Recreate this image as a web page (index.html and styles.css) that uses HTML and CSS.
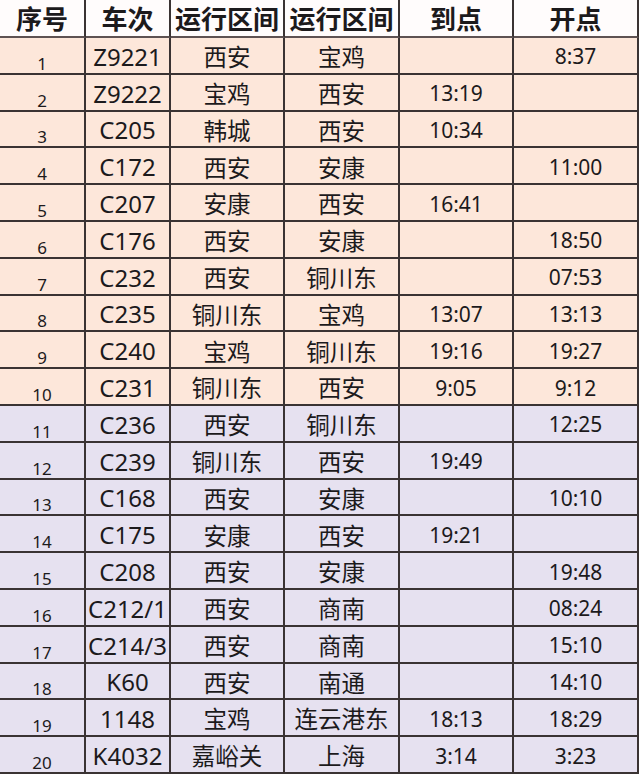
FILE: index.html
```html
<!DOCTYPE html>
<html lang="zh-CN">
<head>
<meta charset="utf-8">
<title>列车时刻表</title>
<link rel="stylesheet" href="styles.css">
</head>
<body>
<div class="table">
  <div class="row head">
    <div class="c">序号</div><div class="c">车次</div><div class="c">运行区间</div><div class="c">运行区间</div><div class="c">到点</div><div class="c">开点</div>
  </div>
  <div class="row peach"><div class="c no">1</div><div class="c tr">Z9221</div><div class="c st">西安</div><div class="c st">宝鸡</div><div class="c tm"></div><div class="c tm">8:37</div></div>
  <div class="row peach"><div class="c no">2</div><div class="c tr">Z9222</div><div class="c st">宝鸡</div><div class="c st">西安</div><div class="c tm">13:19</div><div class="c tm"></div></div>
  <div class="row peach"><div class="c no">3</div><div class="c tr">C205</div><div class="c st">韩城</div><div class="c st">西安</div><div class="c tm">10:34</div><div class="c tm"></div></div>
  <div class="row peach"><div class="c no">4</div><div class="c tr">C172</div><div class="c st">西安</div><div class="c st">安康</div><div class="c tm"></div><div class="c tm">11:00</div></div>
  <div class="row peach"><div class="c no">5</div><div class="c tr">C207</div><div class="c st">安康</div><div class="c st">西安</div><div class="c tm">16:41</div><div class="c tm"></div></div>
  <div class="row peach"><div class="c no">6</div><div class="c tr">C176</div><div class="c st">西安</div><div class="c st">安康</div><div class="c tm"></div><div class="c tm">18:50</div></div>
  <div class="row peach"><div class="c no">7</div><div class="c tr">C232</div><div class="c st">西安</div><div class="c st">铜川东</div><div class="c tm"></div><div class="c tm">07:53</div></div>
  <div class="row peach"><div class="c no">8</div><div class="c tr">C235</div><div class="c st">铜川东</div><div class="c st">宝鸡</div><div class="c tm">13:07</div><div class="c tm">13:13</div></div>
  <div class="row peach"><div class="c no">9</div><div class="c tr">C240</div><div class="c st">宝鸡</div><div class="c st">铜川东</div><div class="c tm">19:16</div><div class="c tm">19:27</div></div>
  <div class="row peach"><div class="c no">10</div><div class="c tr">C231</div><div class="c st">铜川东</div><div class="c st">西安</div><div class="c tm">9:05</div><div class="c tm">9:12</div></div>
  <div class="row lav"><div class="c no">11</div><div class="c tr">C236</div><div class="c st">西安</div><div class="c st">铜川东</div><div class="c tm"></div><div class="c tm">12:25</div></div>
  <div class="row lav"><div class="c no">12</div><div class="c tr">C239</div><div class="c st">铜川东</div><div class="c st">西安</div><div class="c tm">19:49</div><div class="c tm"></div></div>
  <div class="row lav"><div class="c no">13</div><div class="c tr">C168</div><div class="c st">西安</div><div class="c st">安康</div><div class="c tm"></div><div class="c tm">10:10</div></div>
  <div class="row lav"><div class="c no">14</div><div class="c tr">C175</div><div class="c st">安康</div><div class="c st">西安</div><div class="c tm">19:21</div><div class="c tm"></div></div>
  <div class="row lav"><div class="c no">15</div><div class="c tr">C208</div><div class="c st">西安</div><div class="c st">安康</div><div class="c tm"></div><div class="c tm">19:48</div></div>
  <div class="row lav"><div class="c no">16</div><div class="c tr">C212/1</div><div class="c st">西安</div><div class="c st">商南</div><div class="c tm"></div><div class="c tm">08:24</div></div>
  <div class="row lav"><div class="c no">17</div><div class="c tr">C214/3</div><div class="c st">西安</div><div class="c st">商南</div><div class="c tm"></div><div class="c tm">15:10</div></div>
  <div class="row lav"><div class="c no">18</div><div class="c tr">K60</div><div class="c st">西安</div><div class="c st">南通</div><div class="c tm"></div><div class="c tm">14:10</div></div>
  <div class="row lav"><div class="c no">19</div><div class="c tr">1148</div><div class="c st">宝鸡</div><div class="c st">连云港东</div><div class="c tm">18:13</div><div class="c tm">18:29</div></div>
  <div class="row lav"><div class="c no">20</div><div class="c tr">K4032</div><div class="c st">嘉峪关</div><div class="c st">上海</div><div class="c tm">3:14</div><div class="c tm">3:23</div></div>
</div>
</body>
</html>
```
FILE: styles.css
```css
html, body {
  margin: 0;
  padding: 0;
  background: #ffffff;
}
body {
  font-family: "Noto Sans", "Noto Sans CJK SC", sans-serif;
  color: #1c1a1c;
}
.table {
  width: 639px;
}
.row {
  display: grid;
  grid-template-columns: 86px 85px 114px 115px 114px 125px;
  height: 36.8px;
}
.row.head {
  height: 38px;
  background: #fffcfc;
}
.row.peach { background: #fde7da; }
.row.lav { background: #e6e1f0; }
.c {
  box-sizing: border-box;
  border-right: 2px solid #3a3333;
  border-bottom: 2px solid #3a3333;
  display: flex;
  align-items: center;
  justify-content: center;
  white-space: nowrap;
  overflow: visible;
}
.head .c {
  font-family: "Noto Sans CJK SC", sans-serif;
  font-weight: 700;
  font-size: 26px;
  line-height: 1;
  border-bottom-color: #5e5252;
}
.no {
  font-size: 17px;
  line-height: 1;
  align-items: flex-end;
  padding-bottom: 1px;
}
.tr {
  font-size: 24px;
  line-height: 1;
  padding-top: 3px;
}
.st {
  font-family: "Noto Sans CJK SC", sans-serif;
  font-size: 23.5px;
  line-height: 1;
  padding-top: 3px;
}
.tm {
  font-size: 21px;
  line-height: 1;
  padding-top: 3px;
}
```
